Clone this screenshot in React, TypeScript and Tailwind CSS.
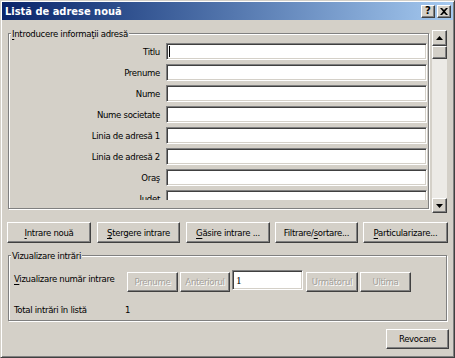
import React from "react";

const FONT = "[font-family:'DejaVu_Sans_Condensed','DejaVu_Sans',sans-serif]";
const TXT = "text-[9.5px] tracking-[-0.3px]";

const RAISED =
  "bg-[#D4D0C8] border border-t-white border-l-white border-r-[#404040] border-b-[#404040] shadow-[inset_-1px_-1px_0_#808080]";
const SUNKEN =
  "bg-white border border-t-[#808080] border-l-[#808080] border-r-white border-b-white shadow-[inset_1px_1px_0_#404040,inset_-1px_-1px_0_#D4D0C8]";
const ETCHED = "border border-[#808080] shadow-[inset_1px_1px_0_#ffffff,1px_1px_0_#ffffff]";

function Btn({
  children,
  className = "",
  disabled = false,
}: {
  children: React.ReactNode;
  className?: string;
  disabled?: boolean;
}) {
  return (
    <div
      className={`${RAISED} ${TXT} flex shrink-0 items-center justify-center leading-none whitespace-nowrap ${
        disabled ? "text-[#a3a09a] [text-shadow:1px_1px_0_#ffffff]" : "text-black"
      } ${className}`}
    >
      <span>{children}</span>
    </div>
  );
}

function U({ children }: { children: React.ReactNode }) {
  return <span className="underline underline-offset-[2px] decoration-[1px]">{children}</span>;
}

const rows = [
  "Titlu",
  "Prenume",
  "Nume",
  "Nume societate",
  "Linia de adresă 1",
  "Linia de adresă 2",
  "Oraş",
  "Judeţ",
];

export default function App() {
  return (
    <div
      className={`${FONT} w-[455px] h-[358px] overflow-hidden bg-[#D4D0C8] border border-t-[#D4D0C8] border-l-[#D4D0C8] border-r-[#404040] border-b-[#404040] shadow-[inset_1px_1px_0_#ffffff,inset_-1px_-1px_0_#808080] p-[1px] text-black`}
    >
      <div className="flex flex-col h-full">
        {/* Title bar */}
        <div className="h-[18px] shrink-0 flex items-center bg-linear-to-r from-[#0A246A] to-[#A6CAF0] pl-[3px] pr-[2px]">
          <span className="text-white font-bold text-[11px] leading-none">Listă de adrese nouă</span>
          <div className="ml-auto flex gap-[2px]">
            <div className={`${RAISED} w-[14px] h-[13px] flex items-center justify-center`}>
              <span className="text-[10px] font-bold leading-none [font-family:'DejaVu_Sans',sans-serif]">?</span>
            </div>
            <div className={`${RAISED} w-[14px] h-[13px] flex items-center justify-center`}>
              <svg width="8" height="7" viewBox="0 0 8 7">
                <path d="M0 0h2l2 2 2-2h2L5 3.5 8 7H6L4 5 2 7H0l3-3.5z" fill="#000" />
              </svg>
            </div>
          </div>
        </div>

        {/* Scroll panel */}
        <div className="mt-[8px] ml-[1px] w-[446px] h-[186px] shrink-0 flex">
          {/* Group box 1 */}
          <div className={`${ETCHED} relative ml-[5px] mt-[5px] w-[421px] h-[176px]`}>
            <div className={`absolute left-[2px] top-[-7px] bg-[#D4D0C8] px-[1px] ${TXT} leading-[13px]`}>
              <U>I</U>ntroducere informaţii adresă
            </div>
            <div className="h-[166px] overflow-hidden pt-[9px] flex flex-col gap-[4px]">
              {rows.map((r, i) => (
                <div key={r} className="flex items-center h-[17px] shrink-0">
                  <div className={`w-[151px] text-right ${TXT} leading-none`}>{r}</div>
                  <div className={`${SUNKEN} relative ml-[6px] w-[261px] h-[17px]`}>
                    {i === 0 && (
                      <div className="absolute left-[2px] top-[2px] w-[1px] h-[11px] bg-black" />
                    )}
                  </div>
                </div>
              ))}
            </div>
          </div>

          {/* Scrollbar */}
          <div className="ml-[3px] mt-[2px] w-[15px] h-[183px] flex flex-col bg-[#ECEAE6]">
            <div className={`${RAISED} w-[15px] h-[16px] flex items-center justify-center`}>
              <svg width="7" height="4" viewBox="0 0 7 4">
                <path d="M3.5 0L7 4H0z" fill="#000" />
              </svg>
            </div>
            <div className={`${RAISED} w-[15px] h-[13px]`} />
            <div className="flex-1" />
            <div className={`${RAISED} w-[15px] h-[15px] flex items-center justify-center`}>
              <svg width="7" height="4" viewBox="0 0 7 4">
                <path d="M0 0h7L3.5 4z" fill="#000" />
              </svg>
            </div>
          </div>
        </div>

        {/* Buttons row */}
        <div className="mt-[8px] flex h-[21px] shrink-0">
          <Btn className="ml-[5px] w-[84px] h-[21px]">
            <U>I</U>ntrare nouă
          </Btn>
          <Btn className="ml-[6px] w-[83px] h-[21px]">
            <U>Ş</U>tergere intrare
          </Btn>
          <Btn className="ml-[6px] w-[84px] h-[21px]">
            <U>G</U>ăsire intrare ...
          </Btn>
          <Btn className="ml-[5px] w-[83px] h-[21px]">
            Filtrare/<U>s</U>ortare...
          </Btn>
          <Btn className="ml-[5px] w-[85px] h-[21px]">
            <U>P</U>articularizare...
          </Btn>
        </div>

        {/* Group box 2 */}
        <div className={`${ETCHED} relative mt-[12px] ml-[6px] w-[439px] h-[66px] shrink-0`}>
          <div className={`absolute left-[2px] top-[-7px] bg-[#D4D0C8] px-[1px] ${TXT} leading-[13px]`}>
            Vizualizare intrări
          </div>
          <div className="flex items-start pt-[14px] pl-[5px]">
            <div className={`w-[113px] mt-[2px] ${TXT} leading-[13px] whitespace-nowrap`}>
              <U>V</U>izualizare număr intrare
            </div>
            <Btn disabled className="mt-[2px] w-[51px] h-[20px]">
              Prenume
            </Btn>
            <Btn disabled className="mt-[2px] ml-[2px] w-[50px] h-[20px]">
              Anteriorul
            </Btn>
            <div className={`${SUNKEN} ml-[2px] w-[71px] h-[20px] flex items-center pl-[3px]`}>
              <span className="text-[11px] leading-none [font-family:'Liberation_Serif',serif]">1</span>
            </div>
            <Btn disabled className="mt-[2px] ml-[3px] w-[52px] h-[20px]">
              Următorul
            </Btn>
            <Btn disabled className="mt-[2px] ml-[2px] w-[51px] h-[20px]">
              Ultima
            </Btn>
          </div>
          <div className={`flex mt-[11px] pl-[5px] ${TXT} leading-[13px]`}>
            <div className="w-[111px]">Total intrări în listă</div>
            <div>1</div>
          </div>
        </div>

        {/* Revocare */}
        <div className="mt-[8px] flex justify-end pr-[4px]">
          <Btn className="w-[63px] h-[20px]">Revocare</Btn>
        </div>
      </div>
    </div>
  );
}
